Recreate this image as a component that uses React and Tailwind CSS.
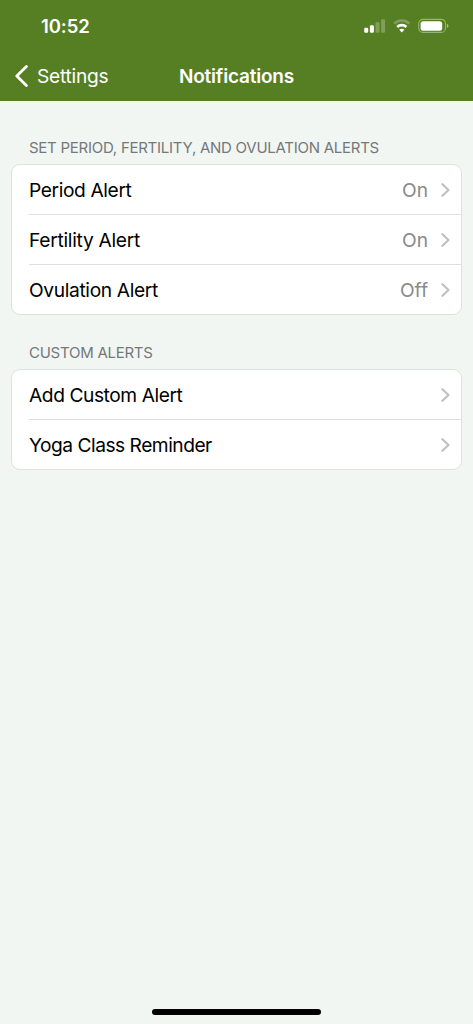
function Chevron() {
  return (
    <svg className="ml-[13px] h-[14px] w-[9px] shrink-0" viewBox="0 0 9 14" fill="none" stroke="#c0c0c0" strokeWidth="2.2" strokeLinecap="round" strokeLinejoin="round">
      <path d="M1.4 1.2 7.5 7 1.4 12.8" />
    </svg>
  );
}

function Row({ label, value, tracking, last }) {
  return (
    <button type="button" className={`flex w-full pl-[17px] text-left ${last ? "h-[49px]" : "h-[50px]"}`}>
      <span className={`flex h-full flex-1 items-center pr-[11px] ${last ? "" : "border-b border-[#dedfde]"}`}>
        <span className={`whitespace-nowrap ${tracking}`}>{label}</span>
        <span className="ml-auto text-[#8a8a8a]">{value}</span>
        <Chevron />
      </span>
    </button>
  );
}

function Section({ title, children }) {
  return (
    <section>
      <h2 className="flex h-5 items-center whitespace-nowrap pl-[18px] text-[15px] tracking-[-0.26px] text-[#75787a]">{title}</h2>
      <div className="mt-1.5 overflow-hidden rounded-[9px] border border-[#dfe1df] bg-white text-[19.2px] leading-6 text-black">
        {children}
      </div>
    </section>
  );
}

function StatusIcons() {
  return (
    <svg className="ml-auto h-5 w-[86px]" viewBox="0 0 86 20" fill="white">
      <rect x="0.2" y="11.8" width="4" height="4.9" rx="1.2" />
      <rect x="5.9" y="9.2" width="4" height="7.5" rx="1.2" />
      <rect x="11.5" y="6.3" width="4" height="10.4" rx="1.2" opacity=".25" />
      <rect x="17.1" y="3.2" width="4" height="13.5" rx="1.2" opacity=".25" />
      <g fill="none" stroke="white" strokeWidth="2.6">
        <path d="M30.2 7.6a11 11 0 0 1 15.2 0" opacity=".25" />
        <path d="M33.2 11a6.7 6.7 0 0 1 9.2 0" />
      </g>
      <path d="M35.2 13.7q2.6-2.1 5.2 0l-2.6 2.7z" />
      <rect x="54.7" y="3.4" width="26.8" height="13" rx="4.2" fill="none" stroke="white" strokeWidth="1.1" opacity=".4" />
      <rect x="56.6" y="5.2" width="21.6" height="9.5" rx="2.5" />
      <path d="M83 7.8q3 2.1 0 4.2z" opacity=".5" />
    </svg>
  );
}

export default function App() {
  return (
    <div className="flex h-[1024px] w-[473px] flex-col overflow-hidden bg-[#f1f6f3] font-['Inter',sans-serif]">
      <header className="h-[101px] shrink-0 bg-[#567f23] text-white">
        <div className="flex h-[52px] items-center pl-[41px] pr-[23px]">
          <span className="text-[18.5px] font-semibold leading-6 tracking-[-0.1px]">10:52</span>
          <StatusIcons />
        </div>
        <div className="grid h-12 grid-cols-[1fr_auto_1fr] items-center">
          <button type="button" className="flex items-center pl-[14.5px]">
            <svg className="h-[22px] w-[13px]" viewBox="0 0 13 22" fill="none" stroke="white" strokeWidth="2.8" strokeLinecap="round" strokeLinejoin="round">
              <path d="M11.4 1.6 1.8 11l9.6 9.4" />
            </svg>
            <span className="ml-[9.5px] text-[19.2px] leading-7 tracking-[-0.25px]">Settings</span>
          </button>
          <h1 className="pt-px text-[19px] font-semibold leading-7 tracking-[-0.2px]">Notifications</h1>
        </div>
      </header>
      <main className="flex flex-1 flex-col gap-7 px-[11px] pt-[37px]">
        <Section title="SET PERIOD, FERTILITY, AND OVULATION ALERTS">
          <Row label="Period Alert" value="On" tracking="tracking-[-0.38px]" />
          <Row label="Fertility Alert" value="On" tracking="tracking-[-0.28px]" />
          <Row label="Ovulation Alert" value="Off" tracking="tracking-[-0.36px]" last />
        </Section>
        <Section title="CUSTOM ALERTS">
          <Row label="Add Custom Alert" tracking="tracking-[-0.43px]" />
          <Row label="Yoga Class Reminder" tracking="tracking-[-0.5px]" last />
        </Section>
      </main>
      <div className="mx-auto mb-[9px] h-[6px] w-[169px] shrink-0 rounded-full bg-black" />
    </div>
  );
}
